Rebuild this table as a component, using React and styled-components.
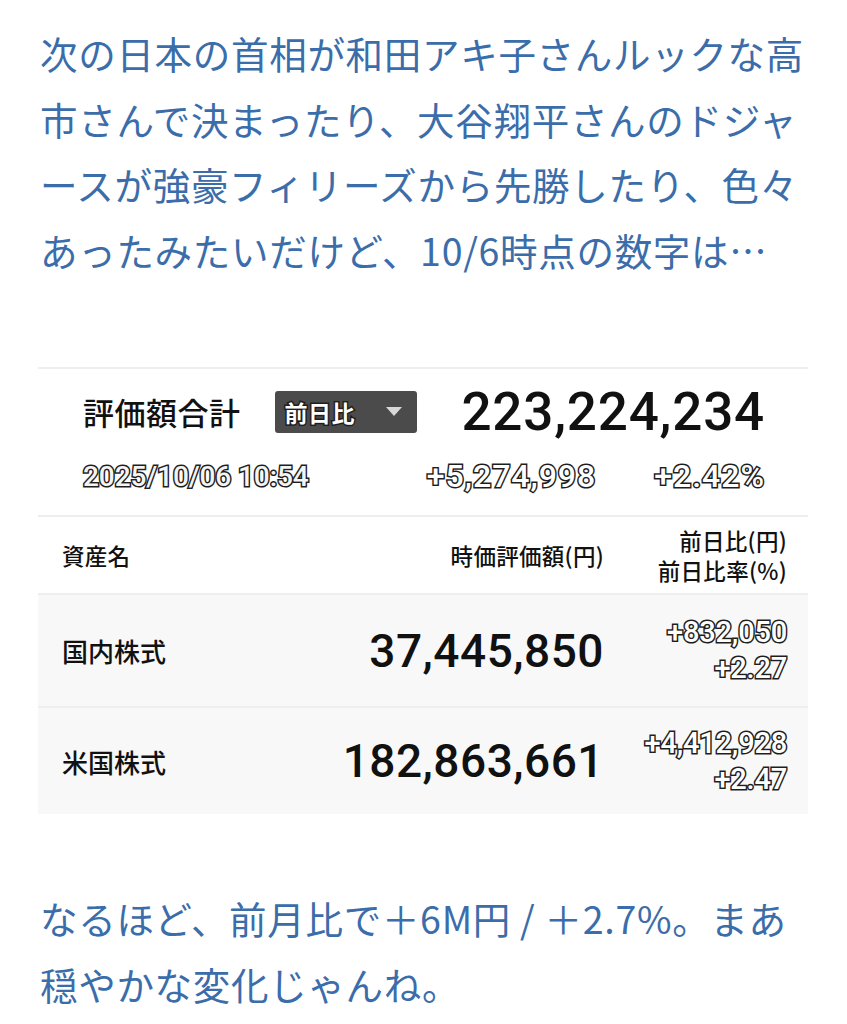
import React from "react";
import styled, { createGlobalStyle } from "styled-components";

const Global = createGlobalStyle`
  html, body { margin: 0; padding: 0; background: #fff; }
  body { font-family: "Noto Sans CJK JP", "Noto Sans", sans-serif; }
`;

const Page = styled.div`
  width: 847px;
  padding: 20px 0 0 40px;
  box-sizing: border-box;
`;

const Para = styled.p`
  margin: 0;
  width: 780px;
  color: #3b6daa;
  font-family: "Noto Sans CJK JP", sans-serif;
  font-size: 37.5px;
  line-height: 65.5px;
  font-weight: 400;
  letter-spacing: 0.7px;
`;

const Table = styled.section`
  width: 770px;
  margin: 85px 0 71px -2px;
  border-top: 2px solid #eeeeee;
  color: #111;
`;

const Summary = styled.div`
  padding: 20px 43px 22px 45px;
  border-bottom: 2px solid #eeeeee;
  display: flex;
  flex-direction: column;
  gap: 25px;
`;

const SumRow = styled.div`
  display: flex;
  align-items: center;
`;

const SumLabel = styled.div`
  font-size: 31px;
  font-weight: 500;
  letter-spacing: 0.5px;
`;

const Dropdown = styled.div`
  margin-left: 34px;
  width: 142px;
  height: 42px;
  box-sizing: border-box;
  background: #4b4b4b;
  border-radius: 3px;
  display: flex;
  align-items: center;
  justify-content: space-between;
  padding: 0 15px 0 10px;
`;

const Outlined = styled.span`
  color: ${(p) => p.$fill || "#fff"};
  -webkit-text-stroke: ${(p) => p.$stroke || 3}px #1e1e1e;
  paint-order: stroke fill;
`;

const DropText = styled(Outlined)`
  font-size: 23px;
  font-weight: 700;
  letter-spacing: 0.5px;
`;

const Total = styled.div`
  margin-left: auto;
  font-family: Roboto, "Liberation Sans", sans-serif;
  font-size: 53px;
  font-weight: 500;
  letter-spacing: 0.8px;
  line-height: 42px;
`;

const DateText = styled(Outlined)`
  font-family: Roboto, "Liberation Sans", sans-serif;
  font-size: 28px;
  font-weight: 500;
  letter-spacing: -0.1px;
`;

const Change = styled(Outlined)`
  font-family: Roboto, "Liberation Sans", sans-serif;
  font-size: 32px;
  font-weight: 500;
  line-height: 34px;
  margin-left: ${(p) => p.$ml || "0"};
  letter-spacing: 1px;
`;

const Grid = styled.div`
  display: grid;
  grid-template-columns: 1fr 300px 167px;
  column-gap: 16px;
  align-items: center;
  padding: 0 21px 0 24px;
  height: ${(p) => p.$h}px;
  background: ${(p) => p.$bg || "#fff"};
  border-bottom: ${(p) => (p.$last ? "none" : "2px solid #eeeeee")};
`;

const HeadCell = styled.div`
  font-size: 22.5px;
  font-weight: 500;
  line-height: 30px;
  text-align: ${(p) => p.$align || "left"};
  letter-spacing: 0.3px;
`;

const HeadLine = styled.span`
  display: block;
  line-height: 30px;
`;

const Name = styled.div`
  font-size: 26px;
  font-weight: 500;
`;

const Value = styled.div`
  text-align: right;
  font-family: Roboto, "Liberation Sans", sans-serif;
  font-size: 46px;
  font-weight: 500;
  letter-spacing: 0.5px;
`;

const Diffs = styled.div`
  display: flex;
  flex-direction: column;
  align-items: flex-end;
  gap: 3px;
`;

const DiffText = styled(Outlined)`
  font-family: Roboto, "Liberation Sans", sans-serif;
  font-size: 29px;
  font-weight: 500;
  line-height: 33px;
  letter-spacing: -0.2px;
`;

const Caret = () => (
  <svg width="16" height="10" viewBox="0 0 16 10">
    <path d="M0 0 H16 L8 9 Z" fill="#d8d8d8" />
  </svg>
);

const rows = [
  { name: "国内株式", value: "37,445,850", yen: "+832,050", pct: "+2.27", h: 111 },
  { name: "米国株式", value: "182,863,661", yen: "+4,412,928", pct: "+2.47", h: 106 },
];

export default function App() {
  return (
    <>
      <Global />
      <Page>
        <Para>
          次の日本の首相が和田アキ子さんルックな高市さんで決まったり、大谷翔平さんのドジャースが強豪フィリーズから先勝したり、色々あったみたいだけど、10/6時点の数字は…
        </Para>
        <Table>
          <Summary>
            <SumRow>
              <SumLabel>評価額合計</SumLabel>
              <Dropdown>
                <DropText>前日比</DropText>
                <Caret />
              </Dropdown>
              <Total>223,224,234</Total>
            </SumRow>
            <SumRow>
              <DateText $fill="#f4f4f4">2025/10/06 10:54</DateText>
              <Change style={{ marginLeft: "auto" }}>+5,274,998</Change>
              <Change $ml="58px">+2.42%</Change>
            </SumRow>
          </Summary>
          <Grid $h={76}>
            <HeadCell>資産名</HeadCell>
            <HeadCell $align="right">時価評価額(円)</HeadCell>
            <HeadCell $align="right">
              <HeadLine>前日比(円)</HeadLine>
              <HeadLine>前日比率(%)</HeadLine>
            </HeadCell>
          </Grid>
          {rows.map((r, i) => (
            <Grid key={r.name} $h={r.h} $bg="#f8f8f8" $last={i === rows.length - 1}>
              <Name>{r.name}</Name>
              <Value>{r.value}</Value>
              <Diffs>
                <DiffText>{r.yen}</DiffText>
                <DiffText>{r.pct}</DiffText>
              </Diffs>
            </Grid>
          ))}
        </Table>
        <Para>なるほど、前月比で＋6M円 / ＋2.7%。まあ穏やかな変化じゃんね。</Para>
      </Page>
    </>
  );
}
